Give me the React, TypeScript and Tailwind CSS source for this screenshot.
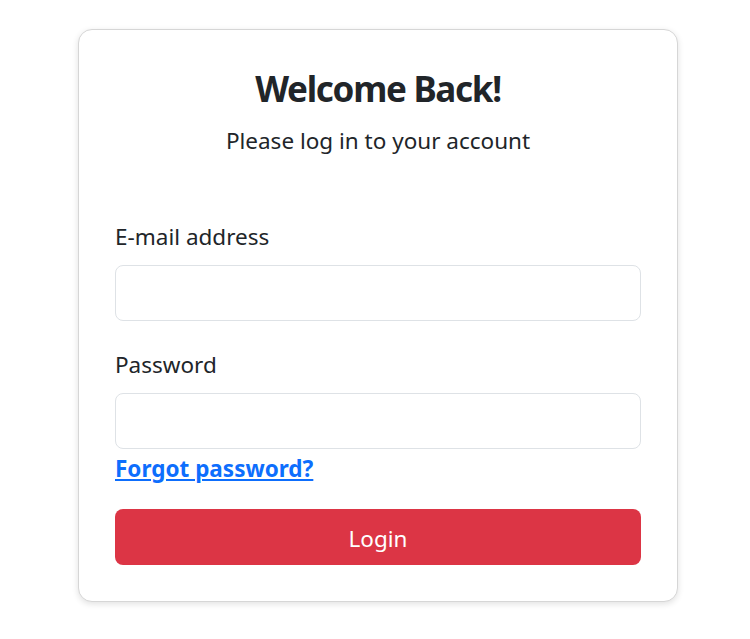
export default function App() {
  return (
    <div
      className="min-h-screen bg-white flex justify-center pt-[29px] pl-[6px] text-[#212529]"
      style={{ fontFamily: '"Noto Sans", "Open Sans", sans-serif' }}
    >
      <div className="w-[600px] h-[573px] border border-[#d6d6d6] rounded-[14px] shadow-[0_2px_6px_rgba(0,0,0,0.12)] bg-white px-[36px] pt-[37px]">
        <h1 className="text-center text-[35px] leading-[44px] font-bold tracking-[-1.3px]">Welcome Back!</h1>
        <p className="text-center text-[22.5px] leading-[30px] mt-[15px]">Please log in to your account</p>

        <form className="mt-[66px]" onSubmit={(e) => e.preventDefault()}>
          <label className="block text-[22.5px] leading-[30px]">E-mail address</label>
          <input
            type="email"
            className="block w-full h-[56px] mt-[13px] border border-[#dee2e6] rounded-[8px] px-3 outline-none"
          />

          <label className="block text-[22.5px] leading-[30px] mt-[29px]">Password</label>
          <input
            type="password"
            className="block w-full h-[56px] mt-[13px] border border-[#dee2e6] rounded-[8px] px-3 outline-none"
          />

          <a href="#" className="inline-block mt-[5px] text-[22.5px] leading-[30px] font-bold text-[#0d6efd] underline">
            Forgot password?
          </a>

          <button
            type="submit"
            className="block w-full h-[56px] mt-[25px] pt-[3px] bg-[#dc3545] text-white text-[22.5px] rounded-[8px]"
          >
            Login
          </button>
        </form>
      </div>
    </div>
  )
}
